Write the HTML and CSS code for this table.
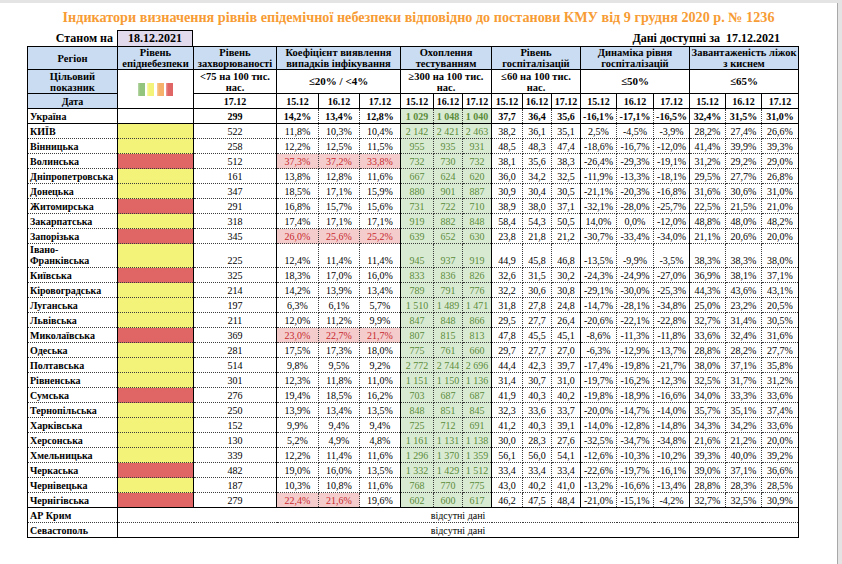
FILE: index.html
```html
<!DOCTYPE html>
<html lang="uk">
<head>
<meta charset="utf-8">
<title>Індикатори визначення рівнів епідемічної небезпеки</title>
<link rel="stylesheet" href="styles.css">
</head>
<body>
<div class="page">
  <h1 class="title">Індикатори визначення рівнів епідемічної небезпеки відповідно до постанови КМУ від 9 грудня 2020 р. № 1236</h1>
  <div class="meta">
    <span class="asof">Станом на</span>
    <span class="datebox">18.12.2021</span>
    <span class="avail">Дані доступні за&nbsp; 17.12.2021</span>
  </div>
  <table class="grid">
    <colgroup>
      <col class="c-reg"><col class="c-lvl"><col class="c-rate">
      <col class="c42"><col class="c41"><col class="c41">
      <col class="c33"><col class="c29"><col class="c29">
      <col class="c31"><col class="c29"><col class="c29">
      <col class="c36"><col class="c37"><col class="c36">
      <col class="c36"><col class="c36"><col class="c37">
    </colgroup>
    <thead>
      <tr class="h1">
        <th class="blue">Регіон</th>
        <th class="blue">Рівень<br>епіднебезпеки</th>
        <th class="blue">Рівень<br>захворюваності</th>
        <th class="blue" colspan="3">Коефіцієнт виявлення<br>випадків інфікування</th>
        <th class="blue" colspan="3">Охоплення<br>тестуванням</th>
        <th class="blue" colspan="3">Рівень<br>госпіталізацій</th>
        <th class="blue" colspan="3">Динаміка рівня<br>госпіталізацій</th>
        <th class="blue" colspan="3">Завантаженість ліжок<br>з киснем</th>
      </tr>
      <tr class="h2">
        <th class="blue">Цільовий<br>показник</th>
        <th rowspan="2"><span class="legend"><i class="lg-g"></i><i class="lg-y"></i><i class="lg-o"></i><i class="lg-r"></i></span></th>
        <th>&lt;75 на 100 тис.<br>нас.</th>
        <th colspan="3" class="big">≤20% / &lt;4%</th>
        <th colspan="3">≥300 на 100 тис.<br>нас.</th>
        <th colspan="3">≤60 на 100 тис.<br>нас.</th>
        <th colspan="3" class="big">≤50%</th>
        <th colspan="3" class="big">≤65%</th>
      </tr>
      <tr class="h3">
        <th class="blue">Дата</th>
        <th>17.12</th>
        <th>15.12</th><th>16.12</th><th>17.12</th>
        <th>15.12</th><th>16.12</th><th>17.12</th>
        <th>15.12</th><th>16.12</th><th>17.12</th>
        <th>15.12</th><th>16.12</th><th>17.12</th>
        <th>15.12</th><th>16.12</th><th>17.12</th>
      </tr>
    </thead>
    <tbody>
      <tr class="ua"><td>Україна</td><td></td><td>299</td><td>14,2%</td><td>13,4%</td><td>12,8%</td><td>1&nbsp;029</td><td>1&nbsp;048</td><td>1&nbsp;040</td><td>37,7</td><td>36,4</td><td>35,6</td><td>-16,1%</td><td>-17,1%</td><td>-16,5%</td><td>32,4%</td><td>31,5%</td><td>31,0%</td></tr>
      <tr class="first"><td>КИЇВ</td><td class="y"></td><td>522</td><td>11,8%</td><td>10,3%</td><td>10,4%</td><td>2&nbsp;142</td><td>2&nbsp;421</td><td>2&nbsp;463</td><td>38,2</td><td>36,1</td><td>35,1</td><td>2,5%</td><td>-4,5%</td><td>-3,9%</td><td>28,2%</td><td>27,4%</td><td>26,6%</td></tr>
      <tr><td>Вінницька</td><td class="y"></td><td>258</td><td>12,2%</td><td>12,5%</td><td>11,5%</td><td>955</td><td>935</td><td>931</td><td>48,5</td><td>48,3</td><td>47,4</td><td>-18,6%</td><td>-16,7%</td><td>-12,0%</td><td>41,4%</td><td>39,9%</td><td>39,3%</td></tr>
      <tr><td>Волинська</td><td class="r"></td><td>512</td><td class="p">37,3%</td><td class="p">37,2%</td><td class="p">33,8%</td><td>732</td><td>730</td><td>732</td><td>38,1</td><td>35,6</td><td>38,3</td><td>-26,4%</td><td>-29,3%</td><td>-19,1%</td><td>31,2%</td><td>29,2%</td><td>29,0%</td></tr>
      <tr><td>Дніпропетровська</td><td class="y"></td><td>161</td><td>13,8%</td><td>12,8%</td><td>11,6%</td><td>667</td><td>624</td><td>620</td><td>36,0</td><td>34,2</td><td>32,5</td><td>-11,9%</td><td>-13,3%</td><td>-18,1%</td><td>29,5%</td><td>27,7%</td><td>26,8%</td></tr>
      <tr><td>Донецька</td><td class="y"></td><td>347</td><td>18,5%</td><td>17,1%</td><td>15,9%</td><td>880</td><td>901</td><td>887</td><td>30,9</td><td>30,4</td><td>30,5</td><td>-21,1%</td><td>-20,3%</td><td>-16,8%</td><td>31,6%</td><td>30,6%</td><td>31,0%</td></tr>
      <tr><td>Житомирська</td><td class="r"></td><td>291</td><td>16,8%</td><td>15,7%</td><td>15,6%</td><td>731</td><td>722</td><td>710</td><td>38,9</td><td>38,0</td><td>37,1</td><td>-32,1%</td><td>-28,0%</td><td>-25,7%</td><td>22,5%</td><td>21,5%</td><td>21,0%</td></tr>
      <tr><td>Закарпатська</td><td class="y"></td><td>318</td><td>17,4%</td><td>17,1%</td><td>17,1%</td><td>919</td><td>882</td><td>848</td><td>58,4</td><td>54,3</td><td>50,5</td><td>14,0%</td><td>0,0%</td><td>-12,0%</td><td>48,8%</td><td>48,0%</td><td>48,2%</td></tr>
      <tr><td>Запорізька</td><td class="r"></td><td>345</td><td class="p">26,0%</td><td class="p">25,6%</td><td class="p">25,2%</td><td>639</td><td>652</td><td>630</td><td>23,8</td><td>21,8</td><td>21,2</td><td>-30,7%</td><td>-33,4%</td><td>-34,0%</td><td>21,1%</td><td>20,6%</td><td>20,0%</td></tr>
      <tr class="tall"><td>Івано-<br>Франківська</td><td class="y"></td><td>225</td><td>12,4%</td><td>11,4%</td><td>11,4%</td><td>945</td><td>937</td><td>919</td><td>44,9</td><td>45,8</td><td>46,8</td><td>-13,5%</td><td>-9,9%</td><td>-3,5%</td><td>38,3%</td><td>38,3%</td><td>38,0%</td></tr>
      <tr><td>Київська</td><td class="r"></td><td>325</td><td>18,3%</td><td>17,0%</td><td>16,0%</td><td>833</td><td>836</td><td>826</td><td>32,6</td><td>31,5</td><td>30,2</td><td>-24,3%</td><td>-24,9%</td><td>-27,0%</td><td>36,9%</td><td>38,1%</td><td>37,1%</td></tr>
      <tr><td>Кіровоградська</td><td class="y"></td><td>214</td><td>14,2%</td><td>13,9%</td><td>13,4%</td><td>789</td><td>791</td><td>776</td><td>32,2</td><td>30,6</td><td>30,8</td><td>-29,1%</td><td>-30,0%</td><td>-25,3%</td><td>44,3%</td><td>43,6%</td><td>43,1%</td></tr>
      <tr><td>Луганська</td><td class="y"></td><td>197</td><td>6,3%</td><td>6,1%</td><td>5,7%</td><td>1&nbsp;510</td><td>1&nbsp;489</td><td>1&nbsp;471</td><td>31,8</td><td>27,8</td><td>24,8</td><td>-14,7%</td><td>-28,1%</td><td>-34,8%</td><td>25,0%</td><td>23,2%</td><td>20,5%</td></tr>
      <tr><td>Львівська</td><td class="y"></td><td>211</td><td>12,0%</td><td>11,2%</td><td>9,9%</td><td>847</td><td>848</td><td>866</td><td>29,5</td><td>27,7</td><td>26,4</td><td>-20,6%</td><td>-22,1%</td><td>-22,8%</td><td>32,7%</td><td>31,4%</td><td>30,5%</td></tr>
      <tr><td>Миколаївська</td><td class="r"></td><td>369</td><td class="p">23,0%</td><td class="p">22,7%</td><td class="p">21,7%</td><td>807</td><td>815</td><td>813</td><td>47,8</td><td>45,5</td><td>45,1</td><td>-8,6%</td><td>-11,3%</td><td>-11,8%</td><td>33,6%</td><td>32,4%</td><td>31,6%</td></tr>
      <tr><td>Одеська</td><td class="y"></td><td>281</td><td>17,5%</td><td>17,3%</td><td>18,0%</td><td>775</td><td>761</td><td>660</td><td>29,7</td><td>27,7</td><td>27,0</td><td>-6,3%</td><td>-12,9%</td><td>-13,7%</td><td>28,8%</td><td>28,2%</td><td>27,7%</td></tr>
      <tr><td>Полтавська</td><td class="y"></td><td>514</td><td>9,8%</td><td>9,5%</td><td>9,2%</td><td>2&nbsp;772</td><td>2&nbsp;744</td><td>2&nbsp;696</td><td>44,4</td><td>42,3</td><td>39,7</td><td>-17,4%</td><td>-19,8%</td><td>-21,7%</td><td>38,0%</td><td>37,1%</td><td>35,8%</td></tr>
      <tr><td>Рівненська</td><td class="y"></td><td>301</td><td>12,3%</td><td>11,8%</td><td>11,0%</td><td>1&nbsp;151</td><td>1&nbsp;150</td><td>1&nbsp;136</td><td>31,4</td><td>30,7</td><td>31,0</td><td>-19,7%</td><td>-16,2%</td><td>-12,3%</td><td>32,5%</td><td>31,7%</td><td>31,2%</td></tr>
      <tr><td>Сумська</td><td class="r"></td><td>276</td><td>19,4%</td><td>18,5%</td><td>16,2%</td><td>703</td><td>687</td><td>687</td><td>41,9</td><td>40,3</td><td>40,2</td><td>-19,8%</td><td>-18,9%</td><td>-16,6%</td><td>34,0%</td><td>33,3%</td><td>33,6%</td></tr>
      <tr><td>Тернопільська</td><td class="y"></td><td>250</td><td>13,9%</td><td>13,4%</td><td>13,5%</td><td>848</td><td>851</td><td>845</td><td>32,3</td><td>33,6</td><td>33,7</td><td>-20,0%</td><td>-14,7%</td><td>-14,0%</td><td>35,7%</td><td>35,1%</td><td>37,4%</td></tr>
      <tr><td>Харківська</td><td class="y"></td><td>152</td><td>9,9%</td><td>9,4%</td><td>9,4%</td><td>725</td><td>712</td><td>691</td><td>41,2</td><td>40,3</td><td>39,1</td><td>-14,0%</td><td>-12,8%</td><td>-14,8%</td><td>34,3%</td><td>34,2%</td><td>33,6%</td></tr>
      <tr><td>Херсонська</td><td class="y"></td><td>130</td><td>5,2%</td><td>4,9%</td><td>4,8%</td><td>1&nbsp;161</td><td>1&nbsp;131</td><td>1&nbsp;138</td><td>30,0</td><td>28,3</td><td>27,6</td><td>-32,5%</td><td>-34,7%</td><td>-34,8%</td><td>21,6%</td><td>21,2%</td><td>20,0%</td></tr>
      <tr><td>Хмельницька</td><td class="y"></td><td>339</td><td>12,2%</td><td>11,4%</td><td>11,6%</td><td>1&nbsp;296</td><td>1&nbsp;370</td><td>1&nbsp;359</td><td>56,1</td><td>56,0</td><td>54,1</td><td>-12,6%</td><td>-10,3%</td><td>-10,2%</td><td>39,3%</td><td>40,0%</td><td>39,2%</td></tr>
      <tr><td>Черкаська</td><td class="r"></td><td>482</td><td>19,0%</td><td>16,0%</td><td>13,5%</td><td>1&nbsp;332</td><td>1&nbsp;429</td><td>1&nbsp;512</td><td>33,4</td><td>33,4</td><td>33,4</td><td>-22,6%</td><td>-19,7%</td><td>-16,1%</td><td>39,0%</td><td>37,1%</td><td>36,6%</td></tr>
      <tr><td>Чернівецька</td><td class="y"></td><td>187</td><td>10,3%</td><td>10,8%</td><td>11,6%</td><td>768</td><td>770</td><td>775</td><td>43,0</td><td>40,2</td><td>41,0</td><td>-13,2%</td><td>-16,6%</td><td>-13,4%</td><td>28,8%</td><td>28,3%</td><td>28,5%</td></tr>
      <tr><td>Чернігівська</td><td class="r"></td><td>279</td><td class="p">22,4%</td><td class="p">21,6%</td><td>19,6%</td><td>602</td><td>600</td><td>617</td><td>46,2</td><td>47,5</td><td>48,4</td><td>-21,0%</td><td>-15,1%</td><td>-4,2%</td><td>32,7%</td><td>32,5%</td><td>30,9%</td></tr>
      <tr class="na first"><td>АР Крим</td><td colspan="17">відсутні дані</td></tr>
      <tr class="na"><td>Севастополь</td><td colspan="17">відсутні дані</td></tr>
    </tbody>
  </table>
</div>
</body>
</html>
```

FILE: styles.css
```css
* { box-sizing: border-box; }
html, body { margin: 0; padding: 0; }
body {
  background: #e4e4e4;
  padding-top: 3px;
  font-family: "Liberation Serif", "Times New Roman", serif;
  color: #000;
}
.page {
  width: 838px;
  height: 561px;
  background: #fff;
  border-right: 1px solid #a8a8a8;
}
.title {
  margin: 0;
  padding-top: 5px;
  text-align: center;
  font-size: 14.2px;
  line-height: 18px;
  font-weight: bold;
  color: #f79c34;
  white-space: nowrap;
}
.meta {
  display: flex;
  margin: 4px 0 0 27px;
  width: 771px;
  height: 16px;
  font-weight: bold;
  font-size: 12px;
  line-height: 16px;
}
.asof { width: 90px; text-align: right; padding-right: 4px; }
.datebox {
  width: 76px;
  background: #e1d9ec;
  border: 1px solid #000;
  border-bottom: none;
  text-align: center;
  line-height: 15px;
}
.avail { flex: 1; text-align: right; padding-right: 18px; }

.grid {
  margin-left: 27px;
  width: 771px;
  border-collapse: collapse;
  table-layout: fixed;
  border: 1.5px solid #000;
}
.c-reg { width: 90px; } .c-lvl { width: 76px; } .c-rate { width: 83px; }
.c42 { width: 42px; } .c41 { width: 41px; } .c33 { width: 33px; }
.c29 { width: 29px; } .c31 { width: 31px; } .c36 { width: 36px; } .c37 { width: 37px; }

th {
  padding: 0;
  border: 1px solid #000;
  font-weight: bold;
  font-size: 10.5px;
  line-height: 11px;
  text-align: center;
  vertical-align: middle;
  background: #fff;
}
th.blue { background: #c9dcf2; }
th.big { font-size: 11px; }
.h1 { height: 23px; }
.h2 { height: 24px; }
.h3 { height: 15px; }
.h3 th { font-size: 10px; }
thead th:nth-child(1) { border-left: 1.5px solid #000; }

.legend { display: inline-flex; gap: 2.5px; vertical-align: middle; }
.legend i { display: block; width: 7px; height: 13px; }
.lg-g { background: linear-gradient(90deg, #b9d7aa, #93c47d 30%); }
.lg-y { background: linear-gradient(90deg, #f8f8b4, #f3f37a 30%); }
.lg-o { background: linear-gradient(90deg, #f9cfa0, #f6b26b 30%); }
.lg-r { background: linear-gradient(90deg, #ee9c9c, #e06666 30%); }

tbody tr { height: 15px; }
tbody tr.tall { height: 24px; }
tbody td {
  padding: 0 0 1px;
  border: 1px dotted #3c3c3c;
  font-size: 10px;
  line-height: 11px;
  text-align: center;
  vertical-align: bottom;
  white-space: nowrap;
}
tbody td:first-child {
  text-align: left;
  padding-left: 2px;
  font-weight: bold;
  font-size: 10px;
  white-space: normal;
}
tbody td:nth-child(2),
tbody td:nth-child(3),
tbody td:nth-child(4),
tbody td:nth-child(7),
tbody td:nth-child(10),
tbody td:nth-child(13),
tbody td:nth-child(16) { border-left: 1.5px solid #000; }

tbody tr:not(.na) td:nth-child(n+7):nth-child(-n+9) {
  background: #d9ead3;
  color: #5b8c3a;
}
tbody tr.ua td { font-weight: bold; border-top: 1px solid #000; }
tbody tr.first td { border-top: 1px solid #000; }
tbody td.y { background: #f3f37a; }
tbody td.r { background: #e06666; }
tbody td.p { background: #f4cccc; color: #c8282c; }
tbody tr.na td:nth-child(2) { font-size: 10px; }
```
